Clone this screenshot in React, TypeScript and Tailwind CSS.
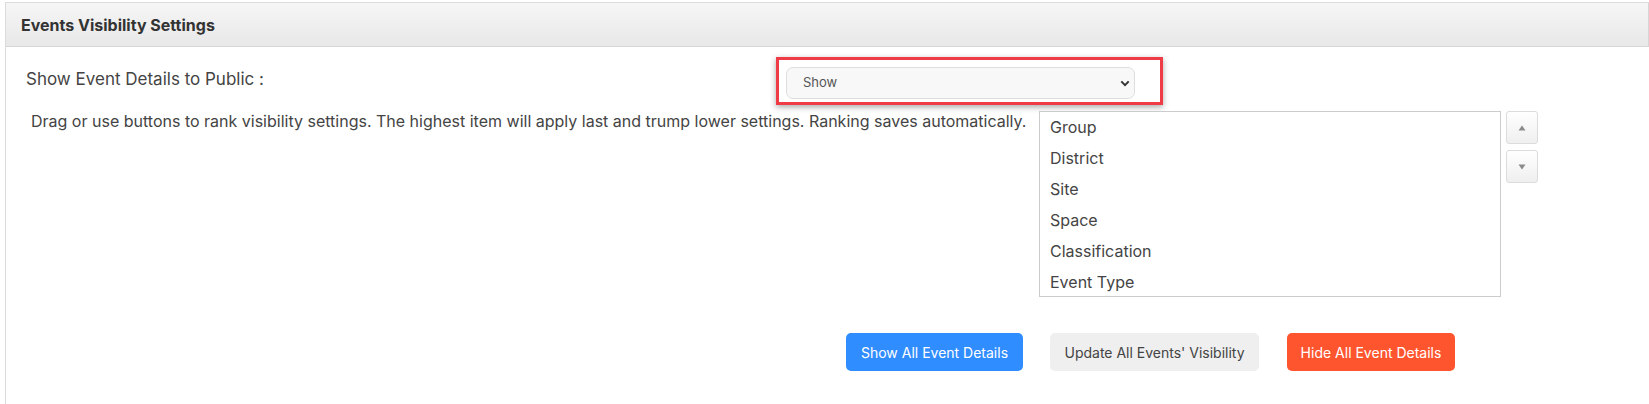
import React from "react";

const items = ["Group", "District", "Site", "Space", "Classification", "Event Type"];

export default function App() {
  return (
    <div className="w-[1649px] h-[404px] bg-white overflow-hidden font-['Inter','Liberation_Sans',sans-serif] text-[#333]">
      <div className="ml-[5px] mt-[2px] border-l border-t border-[#dcdcdc] h-[410px]">
        <div className="h-[44px] border-b border-r border-[#d6d6d6] bg-gradient-to-b from-[#f6f6f6] to-[#e8e8e8] flex items-center pl-[15px]">
          <span className="text-[16px] font-bold text-[#333]">Events Visibility Settings</span>
        </div>
        <div className="pl-[20px] pt-[10px]">
          <div className="flex items-start">
            <div className="w-[750px] pt-[10px] text-[17px] leading-6 text-[#444]">Show Event Details to Public :</div>
            <div className="w-[387px] h-[48px] border-[3px] border-[#ef3b45] shadow-[0_2px_6px_rgba(0,0,0,0.35)] pl-[7px] pt-[7px]">
              <div className="w-[349px] h-[32px] rounded-[7px] border border-[#dedede] bg-[#f8f8f8] flex items-center justify-between pl-[16px] pr-[4px] text-[13px] text-[#555]">
                <span>Show</span>
                <svg width="10" height="7" viewBox="0 0 10 7">
                  <path d="M1.3 1.4 L5 5.1 L8.7 1.4" fill="none" stroke="#333" strokeWidth="2" />
                </svg>
              </div>
            </div>
          </div>
          <div className="flex items-start mt-[6px]">
            <div className="w-[1013px] shrink-0 pl-[5px] text-[16px] leading-5 text-[#444] whitespace-nowrap">
              Drag or use buttons to rank visibility settings. The highest item will apply last and trump lower settings. Ranking saves automatically.
            </div>
            <div className="w-[462px] h-[186px] shrink-0 border border-[#cccccc] bg-white">
              {items.map((it) => (
                <div key={it} className="h-[31px] leading-[31px] pl-[10px] text-[16px] text-[#444]">
                  {it}
                </div>
              ))}
            </div>
            <div className="ml-[5px] flex flex-col gap-[6px] shrink-0">
              <div className="w-[32px] h-[33px] rounded-[3px] border border-[#dcdcdc] bg-gradient-to-b from-white to-[#efefef] flex items-center justify-center">
                <svg width="8" height="6" viewBox="0 0 8 6">
                  <path d="M4 0.5 L7.5 5.5 L0.5 5.5 Z" fill="#8a8a8a" />
                </svg>
              </div>
              <div className="w-[32px] h-[33px] rounded-[3px] border border-[#dcdcdc] bg-gradient-to-b from-white to-[#efefef] flex items-center justify-center">
                <svg width="8" height="6" viewBox="0 0 8 6">
                  <path d="M0.5 0.5 L7.5 0.5 L4 5.5 Z" fill="#8a8a8a" />
                </svg>
              </div>
            </div>
          </div>
          <div className="flex mt-[36px] pl-[820px]">
            <button className="w-[177px] h-[38px] rounded-[5px] bg-[#2f8dff] text-white text-[14px]">Show All Event Details</button>
            <button className="ml-[27px] w-[209px] h-[38px] rounded-[5px] bg-[#efefef] text-[#444] text-[14px]">Update All Events' Visibility</button>
            <button className="ml-[28px] w-[168px] h-[38px] rounded-[5px] bg-[#ff552f] text-white text-[14px]">Hide All Event Details</button>
          </div>
        </div>
      </div>
    </div>
  );
}
